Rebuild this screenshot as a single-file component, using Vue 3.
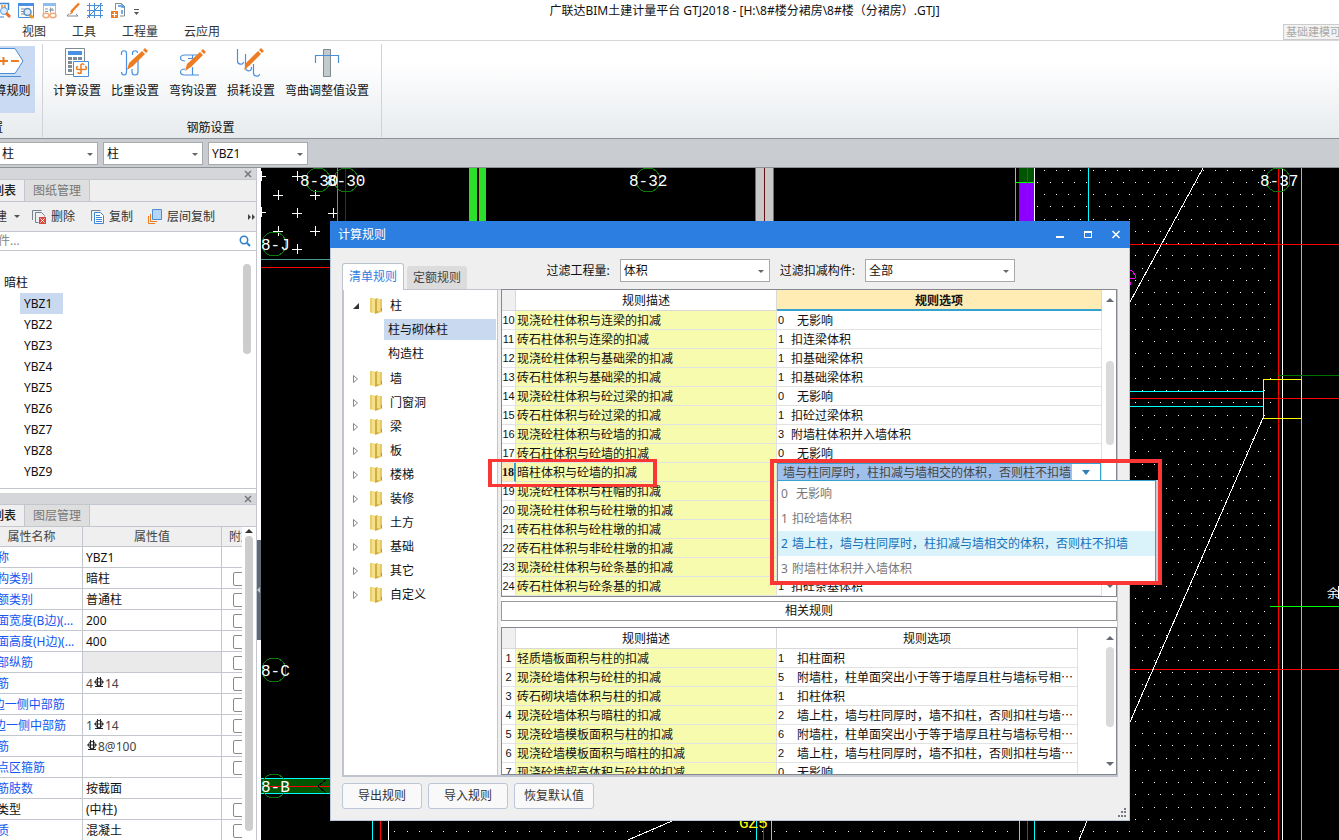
<script setup>
import { ref } from 'vue'

const menus = ['视图', '工具', '工程量', '云应用']
const members = ['YBZ1', 'YBZ2', 'YBZ3', 'YBZ4', 'YBZ5', 'YBZ6', 'YBZ7', 'YBZ8', 'YBZ9']
const selectedMember = ref('YBZ1')

const properties = [
  { name: '名称', value: 'YBZ1', noCheck: true },
  { name: '结构类别', value: '暗柱' },
  { name: '定额类别', value: '普通柱' },
  { name: '截面宽度(B边)(...', value: '200' },
  { name: '截面高度(H边)(...', value: '400' },
  { name: '全部纵筋', value: '', disabled: true },
  { name: '角筋', pre: '4', value: '14', rebar: true },
  { name: 'B边一侧中部筋', value: '' },
  { name: 'H边一侧中部筋', pre: '1', value: '14', rebar: true },
  { name: '箍筋', pre: '', value: '8@100', rebar: true },
  { name: '节点区箍筋', value: '' },
  { name: '箍筋肢数', value: '按截面', noCheck: true },
  { name: '柱类型', value: '(中柱)', plain: true },
  { name: '材质', value: '混凝土' },
]

const folders = ['墙', '门窗洞', '梁', '板', '楼梯', '装修', '土方', '基础', '其它', '自定义']

const rules = [
  [10, '现浇砼柱体积与连梁的扣减', '0', '无影响', true],
  [11, '砖石柱体积与连梁的扣减', '1', '扣连梁体积'],
  [12, '现浇砼柱体积与基础梁的扣减', '1', '扣基础梁体积'],
  [13, '砖石柱体积与基础梁的扣减', '1', '扣基础梁体积'],
  [14, '现浇砼柱体积与砼过梁的扣减', '0', '无影响', true],
  [15, '砖石柱体积与砼过梁的扣减', '1', '扣砼过梁体积'],
  [16, '现浇砼柱体积与砼墙的扣减', '3', '附墙柱体积并入墙体积'],
  [17, '砖石柱体积与砼墙的扣减', '0', '无影响', true],
  [18, '暗柱体积与砼墙的扣减', '', ''],
  [19, '现浇砼柱体积与柱帽的扣减', '', ''],
  [20, '现浇砼柱体积与砼柱墩的扣减', '', ''],
  [21, '砖石柱体积与砼柱墩的扣减', '', ''],
  [22, '砖石柱体积与非砼柱墩的扣减', '', ''],
  [23, '现浇砼柱体积与砼条基的扣减', '', ''],
  [24, '砖石柱体积与砼条基的扣减', '1', '扣砼条基体积'],
]

const related = [
  [1, '轻质墙板面积与柱的扣减', '1', '扣柱面积'],
  [2, '现浇砼墙体积与砼柱的扣减', '5', '附墙柱，柱单面突出小于等于墙厚且柱与墙标号相…'],
  [3, '砖石砌块墙体积与柱的扣减', '1', '扣柱体积'],
  [4, '现浇砼墙体积与暗柱的扣减', '2', '墙上柱，墙与柱同厚时，墙不扣柱，否则扣柱与墙…'],
  [5, '现浇砼墙模板面积与柱的扣减', '6', '附墙柱，柱单面突出小于等于墙厚且柱与墙标号相…'],
  [6, '现浇砼墙模板面积与暗柱的扣减', '2', '墙上柱，墙与柱同厚时，墙不扣柱，否则扣柱与墙…'],
  [7, '现浇砼墙超高体积与砼柱的扣减', '0', '无影响'],
]

const options = [
  ['0', '无影响', true],
  ['1', '扣砼墙体积'],
  ['2', '墙上柱，墙与柱同厚时，柱扣减与墙相交的体积，否则柱不扣墙'],
  ['3', '附墙柱体积并入墙体积'],
]
const activeOption = ref('2')
const cellText = ref('墙与柱同厚时，柱扣减与墙相交的体积，否则柱不扣墙')

// Staggered hatch dots of the slab fill
function dots(x0, y0, x1, y1) {
  let d = ''
  const ox = 1044, oy = 170, step = 12.25
  for (let r = Math.ceil((y0 - oy) / step); oy + r * step < y1; r++) {
    const shift = r % 2 ? step / 2 : 0
    for (let c = Math.ceil((x0 - ox + shift) / step); ox + c * step - shift < x1; c++) {
      d += `M${Math.floor(ox + c * step - shift)} ${Math.floor(oy + r * step)}h1v1h-1z`
    }
  }
  return d
}
const slabDots = dots(1036, 169, 1274, 840) + dots(390, 818, 1030, 840)

const crosses = [
  [261, 176], [297, 176], [278, 195], [315, 195], [261, 212], [297, 213], [333, 213],
  [278, 231], [315, 231], [297, 249],
]
const crossPath = crosses.map(([x, y]) => `M${x - 5} ${y + 0.5}h10M${x + 0.5} ${y - 5}v10`).join('')
</script>

<template>
  <div class="app">
    <header class="titlebar">
      <div class="quick">
        <svg class="q1" width="12" height="18" viewBox="0 0 12 18">
          <path d="M0 1.5H8.500V8" fill="none" stroke="#3f86d0" stroke-width="1.500" />
          <path d="M1 4h2M4 4h2M1 6h2M4 6h2" stroke="#ee7c22" stroke-width="1.500" />
          <circle cx="4" cy="9" r="3.500" fill="#dcecfb" stroke="#5d9ee0" />
          <path d="M6 11l4 4" stroke="#e8702a" stroke-width="3" />
          <path d="M0 15h4" stroke="#3f86d0" />
        </svg>
        <svg width="18" height="18" viewBox="0 0 18 18">
          <path d="M.5 1.500h15v14H.5z" fill="#fff" stroke="#4a8ed8" />
          <path d="M0 1h16v3H0z" fill="#4a90e2" />
          <path d="M3 7h4M3 9.500h3M3 12h4" stroke="#7b8894" />
          <circle cx="9.500" cy="10" r="3.500" fill="#dcecfb" stroke="#5d8ec0" stroke-width="1.500" />
          <path d="M12 13l3 3" stroke="#f19a1f" stroke-width="3" />
        </svg>
        <svg width="18" height="18" viewBox="0 0 18 18">
          <path d="M1.500 1.500h12v12h-12z" fill="#fff" stroke="#9cc3ee" />
          <path d="M1 1h13v3H1z" fill="#8dbcf0" />
          <path d="M3 7h3M3 9.500h3M7 8h5M8.500 5.500v5M10 6v3" stroke="#8a98a5" />
          <ellipse cx="4" cy="13.500" rx="3" ry="2.200" fill="#fff" stroke="#f3a877" stroke-width="1.500" />
          <ellipse cx="11" cy="13.500" rx="3" ry="2.200" fill="#fff" stroke="#f3a877" stroke-width="1.500" />
        </svg>
        <svg width="15" height="18" viewBox="0 0 15 18">
          <path d="M13 1.500L5 10" stroke="#ee7c22" stroke-width="2.500" />
          <path d="M6 9l-3 4 4-2" fill="#ee7c22" />
          <path d="M3 11.500L1 14h11l-2-2" fill="none" stroke="#7d8b92" />
        </svg>
        <svg width="18" height="18" viewBox="0 0 18 18">
          <path d="M0 3.500h16M0 8.500h16M0 13.500h16M2.500 1v15M7.500 1v15M13.500 1v15M0 16L15 1" stroke="#4a8ed8" fill="none" />
        </svg>
        <svg width="16" height="18" viewBox="0 0 16 18">
          <path d="M4.500 8V1.500h6l3 3V14H9" fill="none" stroke="#7e8b93" />
          <path d="M7 4h3M11 2v3h3M11 8v4" fill="none" stroke="#4a8ed8" stroke-width="1.500" />
          <path d="M0 9h7v7H0z" fill="#ee7c22" />
          <path d="M3.500 10v5M1 12.500h5" stroke="#fff" stroke-width="1.200" />
        </svg>
        <svg width="8" height="18" viewBox="0 0 8 18"><path d="M1 7.500h5" stroke="#555" /><path d="M1 10h5l-2.500 3z" fill="#555" /></svg>
      </div>
      <h1>广联达BIM土建计量平台 GTJ2018 - [H:\8#楼分裙房\8#楼（分裙房）.GTJ]</h1>
    </header>

    <nav class="menubar">
      <button v-for="m in menus" :key="m" type="button">{{ m }}</button>
      <input class="command" type="text" aria-label="命令搜索" value="基础建模可" />
    </nav>

    <section class="ribbon">
      <div class="group first">
        <div class="tools">
          <button type="button" class="tool current">
            <svg width="48" height="32" viewBox="0 0 48 32">
              <path d="M0 2.500h32l8 12.500-8 12.500H0" fill="#fff" stroke="#4a8ed8" /><path d="M0 30.500h38" stroke="#4a8ed8" />
              <path d="M16 15h9M20.500 11v8M28 15h8" stroke="#ee7c22" stroke-width="2" />
            </svg>
            <span>计算规则</span>
          </button>
        </div>
        <div class="caption">基本设置</div>
      </div>
      <div class="group">
        <div class="tools">
          <button type="button" class="tool">
            <svg width="32" height="32" viewBox="0 0 32 32">
              <path d="M4.500 2.500h19v26h-19z" fill="#fff" stroke="#7e8b93" />
              <path d="M7 5h14v4H7z" fill="#4a90e2" />
              <path d="M7 11h4v3H7zM12 11h4v3h-4zM17 11h4v3h-4zM7 15h4v3H7zM7 19h4v3H7zM7 23h4v3H7z" fill="#7e8b93" />
              <path d="M12.500 15.500h15v15h-15z" fill="#fff" stroke="#4a8ed8" />
              <path d="M20 18v10M23 19c-1-2-3-1-3 0M24 20.500c2 0 2 3 0 3h-7c-2 0-2-3 0-3M17 26c0 2 3 2 3 0" fill="none" stroke="#ee7c22" stroke-width="1.500" />
            </svg>
            <span>计算设置</span>
          </button>
          <button type="button" class="tool">
            <svg width="32" height="32" viewBox="0 0 32 32">
              <path d="M2.500 9V7c0-3 5-3 5 0v19c0 4-5 4-5 0M13.500 9V7c0-3 5-3 5 0M13 23v3c0 4 6 4 6 0V14" fill="none" stroke="#4a90e2" stroke-width="1.200" />
              <path d="M8 24l2-7L23 5l3 3-12 12z" fill="#ee7c22" /><path d="M24 4l2-2 3 3-2 2z" fill="#ee7c22" />
            </svg>
            <span>比重设置</span>
          </button>
          <button type="button" class="tool">
            <svg width="32" height="32" viewBox="0 0 32 32">
              <path d="M8 15c-6 0-6-6 0-6h14M8 23c-6 0-6 6 0 6h14M15.500 9v4M15.500 21v8M11 12.500h8" fill="none" stroke="#4a90e2" stroke-width="1.200" />
              <path d="M8 25l2-7L23 6l3 3-12 12z" fill="#ee7c22" /><path d="M24 5l2-2 3 3-2 2z" fill="#ee7c22" />
            </svg>
            <span>弯钩设置</span>
          </button>
          <button type="button" class="tool">
            <svg width="32" height="32" viewBox="0 0 32 32">
              <path d="M2.500 3v12c0 4 6 4 6 1M10.500 8v13c0 5 6 5 6 1v-1M18.500 18v9c0 4 6 4 6 1" fill="none" stroke="#4a90e2" stroke-width="1.200" />
              <path d="M9 24l2-7L23 5l3 3-12 12z" fill="#ee7c22" /><path d="M24 4l2-2 3 3-2 2z" fill="#ee7c22" />
            </svg>
            <span>损耗设置</span>
          </button>
          <button type="button" class="tool">
            <svg width="32" height="32" viewBox="0 0 32 32">
              <path d="M12.500 3.500h7v27h-7z" fill="#c3cacd" stroke="#7e8b93" />
              <path d="M4.500 17V9.500h23V17" fill="none" stroke="#4a8ed8" stroke-width="1.200" />
            </svg>
            <span>弯曲调整值设置</span>
          </button>
        </div>
        <div class="caption">钢筋设置</div>
      </div>
    </section>

    <div class="combos">
      <label class="combo head"><select aria-label="构件类型"><option>柱</option></select></label>
      <label class="combo"><select aria-label="构件子类型"><option>柱</option></select></label>
      <label class="combo"><select aria-label="构件名称"><option>YBZ1</option></select></label>
    </div>

    <main class="work">
      <aside class="side">
        <section class="panel members">
          <div class="strip"><button type="button" aria-label="关闭"><svg width="8" height="8" viewBox="0 0 8 8"><path d="M1 1l6 6M7 1L1 7" stroke="#777" stroke-width="1.500" /></svg></button></div>
          <div class="tabs">
            <button type="button" class="on">构件列表</button><button type="button">图纸管理</button>
          </div>
          <div class="toolbar">
            <button type="button" class="new">新建<i class="caret"></i></button>
            <button type="button">
              <svg width="16" height="16" viewBox="0 0 16 16">
                <path d="M.5 11V1.500h9M3.500 13.500V3.500h6l3 3v1M3.500 13.500h3" fill="none" stroke="#76848c" />
                <path d="M7 8h7v7H7z" fill="#d9473f" /><path d="M8.500 9.500l4 4M12.500 9.500l-4 4" stroke="#fff" />
              </svg>删除
            </button>
            <button type="button">
              <svg width="16" height="16" viewBox="0 0 16 16">
                <path d="M1.500 12V1.500h9" fill="none" stroke="#76848c" />
                <path d="M4.500 3.500h6l3 3v8h-9z" fill="#fff" stroke="#3f86d0" /><path d="M6 6.500h4M6 8.500h6M6 10.500h6M6 12.500h6" stroke="#3f86d0" />
              </svg>复制
            </button>
            <button type="button">
              <svg width="16" height="16" viewBox="0 0 16 16">
                <path d="M.5 7v7.500H7M2.500 5v7.500H9" fill="none" stroke="#ee7c22" />
                <path d="M4.500 .5h9v10h-9z" fill="#b5d6fb" stroke="#4a8ed8" />
              </svg>层间复制
            </button>
            <svg class="more" width="9" height="8" viewBox="0 0 9 8"><path d="M1 1l3 3-3 3zM5 1l3 3-3 3z" fill="#444" /></svg>
          </div>
          <div class="search">
            <input type="text" placeholder="搜索构件..." aria-label="搜索构件" />
            <svg width="12" height="12" viewBox="0 0 12 12"><circle cx="5" cy="5" r="3.700" fill="none" stroke="#2f7fc4" stroke-width="1.500" /><path d="M8 8l3 3" stroke="#2f7fc4" stroke-width="2" /></svg>
          </div>
          <div class="list">
            <div class="tree">
              <div class="root">暗柱</div>
              <button
                v-for="m in members" :key="m" type="button"
                :class="{ on: m === selectedMember }" @click="selectedMember = m"
              >{{ m }}</button>
            </div>
            <div class="thumb"></div>
          </div>
        </section>

        <section class="panel props">
          <div class="strip"><button type="button" aria-label="关闭"><svg width="8" height="8" viewBox="0 0 8 8"><path d="M1 1l6 6M7 1L1 7" stroke="#777" stroke-width="1.500" /></svg></button></div>
          <div class="tabs">
            <button type="button" class="on">属性列表</button><button type="button">图层管理</button>
          </div>
          <div class="prop-body">
            <div class="prop-clip">
              <table>
                <colgroup><col class="c1" /><col class="c2" /><col class="c3" /></colgroup>
                <thead><tr><th>属性名称</th><th>属性值</th><th>附加</th></tr></thead>
                <tbody>
                  <tr v-for="p in properties" :key="p.name">
                    <td :class="p.plain ? 'plain' : 'name'">{{ p.name }}</td>
                    <td :class="{ disabled: p.disabled, bar: p.rebar }">{{ p.pre }}<svg v-if="p.rebar" width="12" height="12" viewBox="0 0 12 12"><circle cx="6" cy="5" r="3.500" fill="none" stroke="#222" /><path d="M4.500 0v9.500M7.500 0v9.500M2 9.500h8M1 5h10" stroke="#222" fill="none" /></svg>{{ p.value }}</td>
                    <td><input v-if="!p.noCheck" type="checkbox" :aria-label="p.name + '附加'" /></td>
                  </tr>
                </tbody>
              </table>
            </div>
            <div class="vbar"><i class="up dark"></i><div class="grip"></div></div>
          </div>
        </section>
      </aside>

      <div class="splitter"><div class="handle"><i></i></div></div>

      <div class="canvas">
        <svg class="drawing" viewBox="261 168 1078 672" preserveAspectRatio="xMinYMin slice" shape-rendering="crispEdges" fill="none">
          <path :d="slabDots" fill="#fff" />
          <path :d="crossPath" stroke="#fff" />
          <path d="M261 259.500h75" stroke="#4a9a98" /><path d="M261 267.500h75" stroke="#f00" />
          <path d="M337.500 168v60" stroke="#4a9a98" /><path d="M345.500 168v60" stroke="#0a4a0a" />
          <path d="M469 168h17v56h-17z" fill="#2bdf2b" /><path d="M477.500 168v56" stroke="#300" stroke-width="2" />
          <path d="M756 168h17v56h-17z" fill="#c8c8c8" /><path d="M755.500 168v56M773.500 168v56" stroke="#0b0" /><path d="M764.500 168v56" stroke="#611" />
          <path d="M1019 168h15v15h-15z" fill="#005500" /><path d="M1019 183h15v41h-15z" fill="#8c00ff" />
          <path d="M1015.500 168v14M1088.500 168v56M1301.500 168v672" stroke="#0ff" />
          <path d="M1015.500 224v-41.500H1034" stroke="#0f0" />
          <path d="M1034.500 168v56M1282.500 168v672" stroke="#fff" />
          <path d="M1027.500 168v56M1278.500 168v672M1130 244.500h209M1130 398.500h209M1130 669.500h209" stroke="#f00" />
          <path d="M1120 391.500h143M1120 406.500h143" stroke="#0ff" />
          <path d="M1278 375.500h61" stroke="#007000" /><path d="M1270 606.500h69" stroke="#0f0" />
          <path d="M1203 168L1130 302M1263 418L1130 722M672 821l-44 19M1087 821l-8 19M388.500 818v22" stroke="#fff" />
          <path d="M1263.500 379.500h38v39h-38z" stroke="#ff0" />
          <path d="M1129 270l3 1 4 5-1 2h-6M1130 282l1 2-1 1" stroke="#f0f" />
          <path d="M261 779h75v14h-75z" fill="#005500" />
          <path d="M261 778.500h75M261 793.500h75M372.500 818v22M756.500 818v22M771.500 818v22M1019.500 818v22M1034.500 818v22" stroke="#0ff" />
          <path d="M261 786.500h75M380.500 818v22M763.500 818v22M1027.500 818v22" stroke="#f00" />
          <path d="M326 780l-8 6 8 7" stroke="#000" />
          <g stroke="#0a7a0a">
            <circle cx="318" cy="180" r="12" /><circle cx="346" cy="180" r="12" /><circle cx="648" cy="180" r="12" />
            <circle cx="1278" cy="180" r="12" /><circle cx="274" cy="244" r="12" /><circle cx="274" cy="670" r="12" /><circle cx="274" cy="786" r="12" />
          </g>
          <g class="axis">
            <text x="300" y="186">8-30</text><text x="327" y="186">8-30</text><text x="629" y="186">8-32</text>
            <text x="1260" y="186">8-37</text><text x="261" y="250">8-J</text><text x="261" y="676">8-C</text><text x="261" y="792">8-B</text>
          </g>
          <text class="tag" x="739" y="828">GZ5</text>
          <text class="note" x="1327" y="598">余</text>
          <path d="M1338.500 586v13" stroke="#fff" />
        </svg>

        <section class="dialog" role="dialog" aria-label="计算规则">
          <header>
            <h2>计算规则</h2>
            <button type="button" aria-label="最小化"><svg width="10" height="10" viewBox="0 0 10 10"><path d="M1 7h8" stroke="#fff" stroke-width="2" /></svg></button>
            <button type="button" aria-label="最大化"><svg width="10" height="10" viewBox="0 0 10 10"><path d="M1.500 2v5.500h7V2" fill="none" stroke="#fff" /><path d="M1 2h8" stroke="#fff" stroke-width="2" /></svg></button>
            <button type="button" aria-label="关闭"><svg width="10" height="10" viewBox="0 0 10 10"><path d="M1.500 1l7 7M8.500 1l-7 7" stroke="#fff" stroke-width="1.500" /></svg></button>
          </header>

          <div class="dlg-top">
            <div class="dlg-tabs">
              <button type="button" class="on">清单规则</button><button type="button">定额规则</button>
            </div>
            <div class="filters">
              <label for="f1">过滤工程量:</label>
              <span class="combo"><select id="f1"><option>体积</option></select></span>
              <label for="f2">过滤扣减构件:</label>
              <span class="combo"><select id="f2"><option>全部</option></select></span>
            </div>
          </div>

          <div class="dlg-body">
            <div class="rule-tree">
              <div class="node">
                <svg class="tw" width="8" height="8" viewBox="0 0 8 8"><path d="M7 1v6H1z" fill="#333" /></svg>
                <svg class="fold" width="15" height="18" viewBox="0 0 15 18"><path d="M6 2h7v13l-4 1z" fill="#e6c964" /><path d="M1 1h5v15H2l-1-1z" fill="#f5e18c" /><path d="M1 1h2v14H1z" fill="#ead06c" /><path d="M6 2l3-1v15l-3 1z" fill="#cfae48" /><path d="M8 2h3v12H8z" fill="#f3dc85" /><path d="M12 11h1v3h-1z" fill="#5aa0dc" /></svg>
                <span>柱</span>
              </div>
              <button type="button" class="leaf on">柱与砌体柱</button>
              <button type="button" class="leaf">构造柱</button>
              <div v-for="f in folders" :key="f" class="node">
                <svg class="tw" width="8" height="8" viewBox="0 0 8 8"><path d="M1.500 .5L5.500 4l-4 3.500z" fill="#fff" stroke="#888" /></svg>
                <svg class="fold" width="15" height="18" viewBox="0 0 15 18"><path d="M6 2h7v13l-4 1z" fill="#e6c964" /><path d="M1 1h5v15H2l-1-1z" fill="#f5e18c" /><path d="M1 1h2v14H1z" fill="#ead06c" /><path d="M6 2l3-1v15l-3 1z" fill="#cfae48" /><path d="M8 2h3v12H8z" fill="#f3dc85" /><path d="M12 11h1v3h-1z" fill="#5aa0dc" /></svg>
                <span>{{ f }}</span>
              </div>
            </div>

            <div class="grids">
              <div class="grid">
                <table>
                  <colgroup><col class="no" /><col class="desc" /><col /></colgroup>
                  <thead><tr><th class="corner"></th><th>规则描述</th><th class="picked">规则选项</th></tr></thead>
                  <tbody>
                    <tr v-for="r in rules" :key="r[0]" :class="{ cur: r[0] === 18 }">
                      <td class="num">{{ r[0] }}<div v-if="r[0] === 18" class="mark mark-row"></div></td>
                      <td class="txt">{{ r[1] }}</td>
                      <td v-if="r[0] === 18" class="edit">
                        <div class="editor">
                          <input v-model="cellText" type="text" aria-label="规则选项" />
                          <button type="button" aria-label="展开"><svg width="8" height="5" viewBox="0 0 8 5"><path d="M0 0h8L4 5z" fill="#2f7fb8" /></svg></button>
                        </div>
                        <ul class="popup" role="listbox" aria-label="规则选项">
                          <li
                            v-for="o in options" :key="o[0]" role="option" :aria-selected="o[0] === activeOption"
                            :class="{ on: o[0] === activeOption, wide: o[2] }" @click="activeOption = o[0]"
                          ><b>{{ o[0] }}</b><span>{{ o[1] }}</span></li>
                        </ul>
                        <div class="mark mark-popup"></div>
                      </td>
                      <td v-else class="opt" :class="{ wide: r[4] }"><b>{{ r[2] }}</b><span>{{ r[3] }}</span></td>
                    </tr>
                  </tbody>
                </table>
                <div class="vbar"><i class="up"></i><div class="grip mid"></div><i class="down"></i></div>
              </div>

              <div class="related">相关规则</div>

              <div class="grid lower">
                <table>
                  <colgroup><col class="no" /><col class="desc" /><col /></colgroup>
                  <thead><tr><th class="corner"></th><th>规则描述</th><th>规则选项</th></tr></thead>
                  <tbody>
                    <tr v-for="r in related" :key="r[0]">
                      <td class="num">{{ r[0] }}</td>
                      <td class="txt">{{ r[1] }}</td>
                      <td class="opt wide"><b>{{ r[2] }}</b><span>{{ r[3] }}</span></td>
                    </tr>
                  </tbody>
                </table>
                <div class="vbar"><i class="up"></i><div class="grip top"></div><i class="down"></i></div>
              </div>
            </div>
          </div>

          <footer>
            <button type="button">导出规则</button>
            <button type="button">导入规则</button>
            <button type="button">恢复默认值</button>
            <svg class="resize" width="10" height="10" viewBox="0 0 10 10"><path d="M7 0h2v2H7zM4 3h2v2H4zM7 3h2v2H7zM1 7h2v2H1zM4 7h2v2H4zM7 7h2v2H7z" fill="#777b85" /></svg>
          </footer>
        </section>
      </div>
    </main>
  </div>
</template>

<style>
html, body { margin: 0; overflow: hidden; }
</style>

<style scoped>
.app, .app * { box-sizing: border-box; }
.app {
  display: flex; flex-direction: column; height: 100vh; overflow: hidden;
  font: 12px/18px "Noto Sans", "Noto Sans CJK SC", sans-serif; color: #111; background: #fff;
}
button, input, select { font: inherit; color: inherit; margin: 0; padding: 0; border: 0; background: none; border-radius: 0; }
button { white-space: nowrap; }
svg { flex: none; display: block; }
h1, h2, ul { margin: 0; padding: 0; font-size: 12px; font-weight: normal; list-style: none; }

.titlebar { display: flex; align-items: center; height: 21px; }
.quick { display: flex; width: 150px; gap: 6px; }
.titlebar h1 { flex: 1; text-align: center; }

.menubar { display: flex; align-items: center; gap: 26px; height: 20px; padding: 2px 0 0 22px; border-bottom: 1px solid #d5d7da; color: #333; }
.command { margin-left: auto; width: 56px; height: 16px; padding-left: 2px; border: 1px solid #ccc; border-right: 0; font-size: 11px; color: #aaa; background: #f3f3f3; }

.ribbon { display: flex; height: 98px; padding-top: 3px; background: linear-gradient(#fff 20%, #e7ebee); border-bottom: 1px solid #8e9297; }
.group { display: flex; flex-direction: column; justify-content: space-between; padding: 2px 8px 0 5px; border-right: 1px solid #cfd2d6; margin-bottom: 1px; }
.group.first { width: 43px; padding: 2px 7px 0 0; overflow: hidden; align-items: flex-end; }
.tools { display: flex; }
.tool { display: flex; flex-direction: column; align-items: center; width: 58px; height: 67px; gap: 4px; }
.tool:last-child { width: auto; min-width: 58px; padding: 0 4px 0 5px; }
.tool.current { background: #c9daf2; }
.caption { text-align: center; line-height: 18px; }
.first .caption { margin-right: 32px; white-space: nowrap; }

.combos { display: flex; gap: 5px; height: 29px; padding-top: 3px; background: #c9ccd1; border-bottom: 1px solid #8e9297; }
.combo { position: relative; display: block; width: 100px; height: 23px; border: 1px solid #a9a9a9; background: #fff; }
.combo::after { content: ""; position: absolute; right: 4px; top: 10px; border: 3px solid transparent; border-top-color: #666; border-bottom: 0; pointer-events: none; }
.combo select { appearance: none; width: 100%; height: 100%; padding: 0 16px 0 3px; }
.combo.head { width: 98px; border-left: 0; }
.combo.head select { padding-left: 2px; }

.work { flex: 1; display: flex; min-height: 0; }
.side { width: 257px; display: flex; flex-direction: column; gap: 4px; border-right: 1px solid #c3c6cc; overflow: hidden; }
.panel { display: flex; flex-direction: column; background: #efefef; }
.strip { display: flex; justify-content: flex-end; align-items: center; height: 12px; padding-right: 4px; background: #d4d6da; border-bottom: 1px solid #c3c6cc; }
.tabs { display: flex; height: 22px; border-bottom: 1px solid #c3c6cc; margin-left: -40px; }
.tabs button { padding: 1px 8px 0; width: 65px; border-right: 1px solid #c3c6cc; background: #dedede; color: #777; }
.tabs .on { background: #efefef; color: #222; font-weight: 500; }
.toolbar { display: flex; align-items: center; height: 30px; margin-left: -17px; gap: 15px; border-bottom: 1px solid #c3c6cc; color: #333; }
.toolbar button { display: flex; align-items: center; gap: 3px; }
.toolbar .new { gap: 7px; margin-right: -3px; }
.caret { border: 3px solid transparent; border-top-color: #555; border-bottom: 0; }
.more { margin-left: auto; }
.search { display: flex; align-items: center; height: 19px; padding-right: 5px; border-bottom: 1px solid #c3c6cc; background: #fff; margin-left: -38px; }
.search input { flex: 1; min-width: 0; outline: 0; }
.search input::placeholder { color: #888; opacity: 1; }
.list { display: flex; justify-content: space-between; height: 238px; padding: 13px 5px 0 0; background: #fff; border-bottom: 1px solid #c3c6cc; }
.tree { display: flex; flex-direction: column; align-items: flex-start; padding-top: 8px; }
.tree > * { height: 21px; line-height: 21px; }
.root { padding-left: 4px; }
.tree button { margin-left: 20px; width: 43px; padding-left: 4px; text-align: left; }
.tree .on { background: #c9d9f0; }
.thumb { width: 8px; height: 90px; border-radius: 4px; background: #cdcdcd; }

.props { flex: 1; min-height: 0; }
.prop-body { display: flex; flex: 1; min-height: 0; background: #fff; }
.prop-clip { width: 242px; overflow: hidden; }
.props table { width: 290px; margin-left: -19px; table-layout: fixed; border-collapse: separate; border-spacing: 0; }
.c1 { width: 102px; } .c2 { width: 139px; } .c3 { width: 49px; }
.props th { height: 20px; padding: 1px 0 0; font-weight: normal; color: #444; background: #efefef; border-right: 1px solid #c3c6cc; border-bottom: 1px solid #c3c6cc; }
.props th:last-child { text-align: left; padding-left: 7px; }
.props td { height: 21px; padding: 2px 3px 0; border-right: 1px solid #c3c6cc; border-bottom: 1px solid #c3c6cc; white-space: nowrap; overflow: hidden; }
.props td:first-child { padding: 2px 0 0 4px; }
.props td:last-child { padding-left: 11px; }
.props .name { color: #1457f0; }
.props .disabled { background: #eaeaea; }
.props .bar { color: #444; }
.bar svg { display: inline-block; vertical-align: -1px; }
.props input { appearance: none; display: block; width: 14px; height: 14px; border: 1px solid #8a8a8a; border-radius: 2px; }
.props .vbar { width: 14px; padding: 0; }
.props .grip { flex: 1; margin-bottom: 9px; background: #cdcdcd; }

.splitter { width: 4px; display: flex; align-items: flex-start; padding-top: 372px; background: #fff; }
.handle { width: 4px; height: 100px; display: flex; align-items: center; background: #5f6976; }
.handle i { border: 3px solid transparent; border-right-color: #c8ccd2; border-left: 0; }

.canvas { position: relative; flex: 1; min-width: 0; background: #000; }
.drawing { position: absolute; inset: 0; width: 100%; height: 100%; }
.axis { font: 16px "Liberation Mono", monospace; fill: #fff; }
.tag { font: 16px "Liberation Mono", monospace; fill: #ff0; }
.note { font: 12px "Noto Sans CJK SC", sans-serif; fill: #fff; }

.dialog { position: absolute; left: 69px; top: 53px; width: 800px; background: #efefef; border: 1px solid #b9c5d9; border-top: 0; }
.dialog > header { display: flex; align-items: center; height: 27px; margin: 0 -1px; padding: 0 9px 0 8px; gap: 18px; background: #2c7fe0; color: #fff; }
.dialog h2 { flex: 1; }
.dlg-top { display: flex; justify-content: space-between; align-items: flex-end; height: 41px; padding: 0 114px 0 11px; }
.dlg-tabs { display: flex; align-items: flex-end; gap: 3px; }
.dlg-tabs button { width: 60px; height: 23px; border-radius: 3px 3px 0 0; background: #dcdcdc; color: #444; }
.dlg-tabs .on { position: relative; width: 62px; height: 27px; margin-bottom: -1px; border: 1px solid #bcc2cc; border-bottom: 0; background: #fff; color: #2c7fe0; }
.filters { display: flex; align-items: center; gap: 10px; padding-bottom: 7px; }
.filters .combo { width: 150px; }
.filters .combo::after { right: 5px; }

.dlg-body { display: flex; gap: 3px; height: 488px; margin: 0 11px; border: 1px solid #c0c4cc; border-left-width: 2px; border-bottom-width: 2px; }
.rule-tree { width: 154px; padding-top: 4px; border-right: 1px solid #c0c4cc; background: #fff; }
.node { display: flex; align-items: center; height: 24px; padding-left: 8px; }
.tw { margin-right: 9px; }
.fold { margin-right: 6px; }
.leaf { display: block; width: 112px; height: 21px; margin: 1px 0 3px 40px; padding-left: 4px; text-align: left; }

.leaf.on { background: #c9d9f0; }

.grids { flex: 1; min-width: 0; display: flex; flex-direction: column; background: #fff; margin-top: -1px; }
.grid { display: flex; border: 1px solid #85878f; background: #fff; font-family: "Noto Sans CJK SC", sans-serif; }
.grid table { flex: 1; table-layout: fixed; border-collapse: separate; border-spacing: 0; width: 0; }
.no { width: 14px; } .desc { width: 261px; }
.grid th { height: 21px; padding: 0; line-height: 20px; font-weight: normal; border-right: 1px solid #d8d8d8; border-bottom: 1px solid #d8d8d8; }
.grid th.corner { background: #f0f0f0; }
.grid th.picked { font-weight: bold; line-height: 19px; background: #ffecb5; border-bottom: 2px solid #35a3cf; }
.grid td { height: 19px; padding: 0; line-height: 18px; white-space: nowrap; vertical-align: top; border-right: 1px solid #e2e2e2; border-bottom: 1px solid #e2e2e2; }
.grid td.num { position: relative; text-align: center; font: 11px/18px "Liberation Sans", sans-serif; }
.grid td.txt { padding-left: 1px; background: #f7fbae; }
.grid td.opt { font-size: 0; }
.opt b, .opt span { display: inline-block; vertical-align: top; font-size: 12px; }
.opt b { width: 14px; padding-left: 1px; font: 11px/18px "Liberation Sans", sans-serif; }
.opt.wide b { width: 20px; }
.grid .cur td.num { font-family: "Liberation Serif", serif; font-weight: bold; font-size: 12px; background: #ffecb5; border-right: 2px solid #35a3cf; }
.edit { position: relative; }
.editor { display: flex; height: 18px; border: 1px solid #35a3cf; background: #fff; color: #444; }
.editor input { width: 294px; padding: 0 0 0 5px; background: #a0c0ec; outline: 0; }
.editor button { flex: 1; display: flex; align-items: center; justify-content: center; }
.popup { position: absolute; z-index: 2; top: 17px; left: 0; width: 379px; border: 1px solid #35a3cf; border-bottom: 0; background: #fff; color: #777; box-shadow: 2px 0 0 #c9ccd6; font-family: "Noto Sans", "Noto Sans CJK SC", sans-serif; }
.popup li { display: flex; gap: 4px; height: 25px; padding-left: 3px; line-height: 25px; }
.popup b { font-weight: normal; }
.popup .wide { gap: 8px; }
.popup .on { background: #daf2fa; color: #1470b8; }
.mark { position: absolute; z-index: 3; border: 4px solid #fb3735; pointer-events: none; }
.mark-row { left: -14px; top: -4px; width: 169px; height: 28px; border-width: 3px 4px; }
.mark-popup { left: -7px; top: -4px; width: 392px; height: 126px; }

.vbar { display: flex; flex-direction: column; align-items: center; width: 14px; padding-left: 1px; }
.vbar i { border: 4px solid transparent; }
.vbar .up { border-top: 0; border-bottom-color: #666a75; margin-top: 8px; }
.vbar .down { border-bottom: 0; border-top-color: #666a75; margin-top: auto; margin-bottom: 8px; }
.props .vbar .up { margin-top: 2px; border-bottom-color: #333; }
.grip { width: 8px; border-radius: 4px; background: #dadada; }
.props .vbar .grip { margin-top: 3px; }
.grip.mid { height: 84px; margin-top: 59px; }
.grip.top { height: 80px; margin-top: 7px; }
.related { height: 20px; margin: 4px 0 6px; border: 1px solid #9a9a9a; text-align: center; }
.lower { flex: 1; min-height: 0; overflow: hidden; align-items: flex-start; }
.lower .vbar { width: 38px; height: 100%; padding-left: 25px; }

.dialog > footer { display: flex; gap: 6px; height: 43px; padding: 6px 2px 0 11px; }
.dialog > footer button { width: 80px; height: 26px; border: 1px solid #bcc6d8; border-radius: 3px; background: #f9f9f9; color: #333; }
.resize { margin-left: auto; align-self: flex-end; margin-bottom: 2px; }
</style>
